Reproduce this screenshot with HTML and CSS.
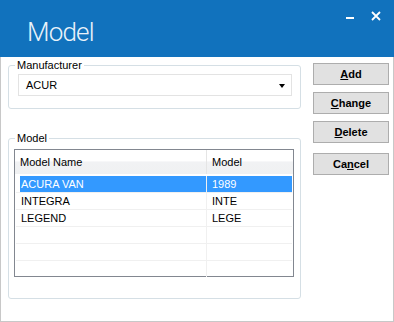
FILE: index.html
```html
<!DOCTYPE html>
<html>
<head>
<meta name="viewport" content="width=device-width, initial-scale=1">
<link rel="stylesheet" href="styles.css">
</head>
<body>

<div class="window">
  <div class="titlebar">
    <span class="title">Model</span>
    <div class="caption-buttons">
      <svg class="cap-min" width="8" height="2" viewBox="0 0 8 2"><rect width="8" height="2" fill="#fff"/></svg>
      <svg class="cap-close" width="10" height="10" viewBox="0 0 10 10"><path d="M1 1 L9 9 M9 1 L1 9" stroke="#fff" stroke-width="1.8"/></svg>
    </div>
  </div>

  <div class="content">
    <div class="left-col">
      <fieldset class="group group-manufacturer">
        <legend>Manufacturer</legend>
        <div class="combo">
          <span>ACUR</span>
          <span class="combo-arrow"></span>
        </div>
      </fieldset>

      <fieldset class="group group-model">
        <legend>Model</legend>
        <div class="listview">
          <div class="lv-header">
            <div class="lv-col col-name">Model Name</div>
            <div class="lv-col col-model">Model</div>
          </div>
          <div class="lv-row first selected">
            <div class="lv-cell col-name">ACURA VAN</div>
            <div class="lv-cell col-model">1989</div>
          </div>
          <div class="lv-row">
            <div class="lv-cell col-name">INTEGRA</div>
            <div class="lv-cell col-model">INTE</div>
          </div>
          <div class="lv-row">
            <div class="lv-cell col-name">LEGEND</div>
            <div class="lv-cell col-model">LEGE</div>
          </div>
          <div class="lv-row">
            <div class="lv-cell col-name"></div>
            <div class="lv-cell col-model"></div>
          </div>
          <div class="lv-row">
            <div class="lv-cell col-name"></div>
            <div class="lv-cell col-model"></div>
          </div>
          <div class="lv-row">
            <div class="lv-cell col-name"></div>
            <div class="lv-cell col-model"></div>
          </div>
        </div>
      </fieldset>
    </div>

    <div class="right-col">
      <button type="button" class="btn"><u>A</u>dd</button>
      <button type="button" class="btn"><u>C</u>hange</button>
      <button type="button" class="btn"><u>D</u>elete</button>
      <button type="button" class="btn btn-cancel">Ca<u>n</u>cel</button>
    </div>
  </div>
</div>

</body>
</html>
```

FILE: styles.css
```css
body {
  margin: 0;
  font-family: "Liberation Sans", Arial, sans-serif;
  font-size: 11px;
  color: #000;
  background: #fff;
}

.window {
  width: 394px;
  height: 322px;
  box-sizing: border-box;
  display: flex;
  flex-direction: column;
}

.titlebar {
  height: 57px;
  background-color: #1172bd;
  display: flex;
  justify-content: space-between;
  flex-shrink: 0;
}

.title {
  font-family: Roboto, sans-serif;
  font-weight: 300;
  font-size: 26px;
  letter-spacing: -0.8px;
  color: #e9f2fa;
  padding: 16px 0 0 27px;
  line-height: 32px;
}

.caption-buttons {
  display: flex;
  align-items: flex-start;
  padding: 0 13px 0 0;
}

.cap-min {
  margin: 17px 17px 0 0;
}

.cap-close {
  margin: 11px 0 0 0;
}

.content {
  flex: 1;
  display: flex;
  border: 1px solid #c8c8c8;
  border-top: none;
  padding: 1px 0 0 7px;
}

.left-col {
  width: 293px;
  display: flex;
  flex-direction: column;
}

/* group boxes */
.group {
  margin: 0;
  border: 1px solid #d5dfe5;
  border-radius: 3px;
  min-width: 0;
}

.group legend {
  padding: 0 2px;
  line-height: 14px;
  margin-left: 0;
}

.group-manufacturer {
  padding: 2px 8px 12px 6px;
}

.group-model {
  margin-top: 22px;
  padding: 4px 6px 21px 5px;
}

.group-model legend {
  margin-left: 1px;
}

/* combo box */
.combo {
  height: 20px;
  margin-left: 3px;
  border: 1px solid #e3e3e3;
  display: flex;
  align-items: center;
  justify-content: space-between;
  padding: 0 6px 0 7px;
}

.combo-arrow {
  width: 0;
  height: 0;
  border-left: 3.5px solid transparent;
  border-right: 3.5px solid transparent;
  border-top: 4px solid #000;
  margin-top: 1px;
}

/* list view */
.listview {
  border: 1px solid #828790;
  height: 126px;
}

.lv-header {
  height: 24px;
  display: grid;
  grid-template-columns: 191px 1fr;
  background: linear-gradient(#ffffff 0%, #ffffff 45%, #f1f2f4 50%, #f0f1f2 100%);
  margin-bottom: 1px;
}

.lv-col {
  line-height: 24px;
  padding-left: 5px;
}

.lv-col.col-model {
  border-left: 1px solid #e5e5e5;
  padding-left: 5px;
}

.lv-row {
  display: grid;
  grid-template-columns: 186px 1fr;
  height: 16px;
  margin: 0 1px 0 1px;
  padding-left: 4px;
  border-top: 1px solid #f0f0f0;
  line-height: 16px;
}

.lv-row.first {
  border-top-color: #fff;
}

.lv-row.selected {
  background-color: #3399ff;
  background-clip: content-box;
  color: #fff;
}

.lv-cell.col-name {
  padding-left: 1px;
}

.lv-cell.col-model {
  border-left: 1px solid #f0f0f0;
  padding-left: 5px;
}

/* buttons */
.right-col {
  margin-left: 12px;
  width: 76px;
  display: flex;
  flex-direction: column;
  padding-top: 5px;
}

.btn {
  height: 22px;
  margin-bottom: 7px;
  background-color: #e1e1e1;
  border: 1px solid #adadad;
  font-family: "Liberation Sans", Arial, sans-serif;
  font-size: 11px;
  font-weight: bold;
  color: #000;
  padding: 0;
  cursor: pointer;
}

.btn-cancel {
  margin-top: 3px;
}
```
